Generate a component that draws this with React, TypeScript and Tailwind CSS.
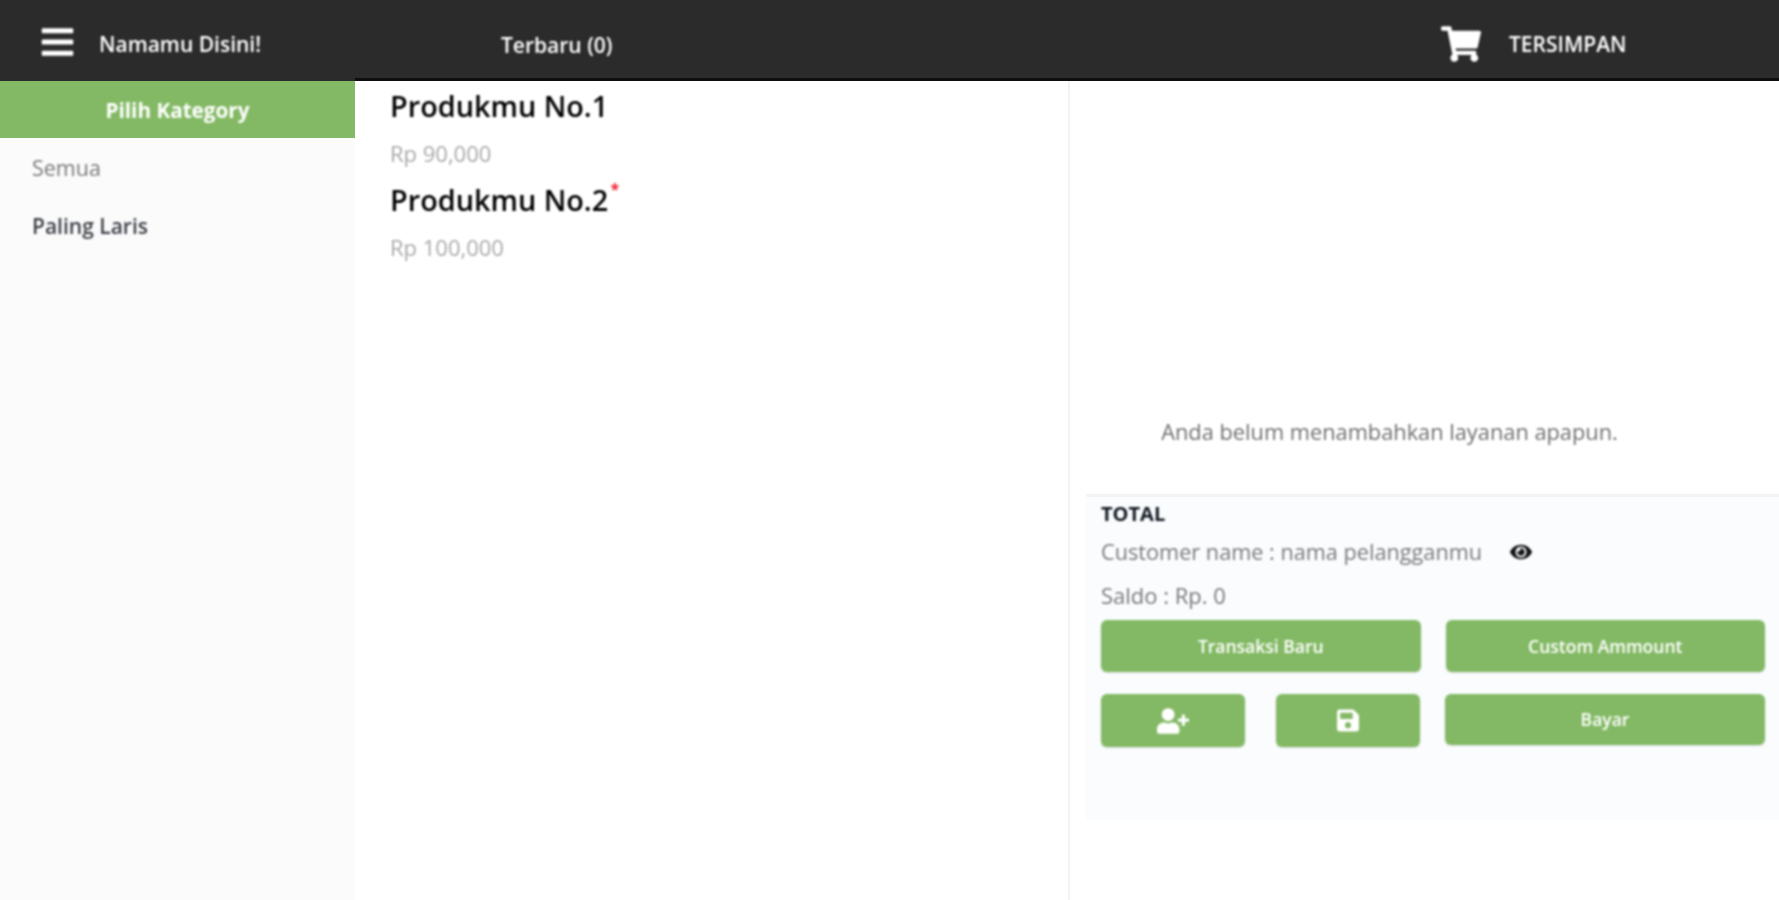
import { FaBars, FaShoppingCart, FaUserPlus, FaSave, FaEye } from "react-icons/fa";

const font = { fontFamily: '"Open Sans", sans-serif' };

function Product({ name, price, star }: { name: string; price: string; star?: boolean }) {
  return (
    <div className="h-[94px] pl-[35px]">
      <div className="relative w-fit text-[28.8px] leading-[38px] font-semibold text-black">
        {name}
        {star && <span className="absolute right-[-11px] top-[-4px] text-[16px] font-bold leading-[24px] text-[#f01c2c]">*</span>}
      </div>
      <div className="mt-[14px] text-[22px] leading-[28px] text-[#a8a8a8]">{price}</div>
    </div>
  );
}

function Btn({ className, children }: { className: string; children: React.ReactNode }) {
  return (
    <button className={`flex items-center justify-center rounded-[6px] bg-[#83b964] text-[17.5px] font-semibold text-white shadow-[0_1px_2px_rgba(0,0,0,0.12)] ${className}`}>
      {children}
    </button>
  );
}

export default function App() {
  return (
    <div style={font} className="flex h-[900px] w-[1779px] flex-col overflow-hidden bg-white">
      <header className="h-[81px] shrink-0 bg-[#2a2b2a] text-white">
        <div className="flex h-full items-center blur-[0.8px]">
          <FaBars className="ml-[41px] mt-[2px] h-[36px] w-[33px] text-white" />
          <span className="ml-[25px] mt-[9px] w-[402px] text-[21px] font-semibold">Namamu Disini!</span>
          <span className="mt-[11px] w-[940px] text-[21px] font-semibold">Terbaru (0)</span>
          <FaShoppingCart className="mt-[6px] h-[36px] w-[40px]" />
          <span className="ml-[28px] mt-[8px] text-[21px] font-semibold">TERSIMPAN</span>
        </div>
      </header>
      <main className="flex min-h-0 flex-1">
        <aside className="w-[355px] shrink-0 bg-[#fbfbfb]">
          <div className="flex h-[57px] items-center justify-center bg-[#83b964] pt-[2px] text-[20.7px] font-bold text-white">
            <span className="blur-[0.8px]">Pilih Kategory</span>
          </div>
          <div className="blur-[0.8px]">
            <div className="mt-[15px] pl-[32px] text-[21.5px] leading-[30px] text-[#787878]">Semua</div>
            <div className="mt-[28px] pl-[32px] text-[21px] font-semibold leading-[30px] text-[#3c4047]">Paling Laris</div>
          </div>
        </aside>
        <div className="-mt-[3px] flex flex-1 border-t-[3px] border-[#0e0e0e]">
          <section className="w-[715px] shrink-0 border-r-[2px] border-[#f3f3f3] pt-[6px]">
            <div className="blur-[0.8px]">
              <Product name="Produkmu No.1" price="Rp 90,000" />
              <Product name="Produkmu No.2" price="Rp 100,000" star />
            </div>
          </section>
          <section className="flex-1 pl-[16px]">
            <div className="flex h-[413px] items-end justify-center pb-[47px]">
              <span className="mr-[86px] text-[21.8px] leading-[30px] text-[#6e6e6e] blur-[0.8px]">Anda belum menambahkan layanan apapun.</span>
            </div>
            <div className="h-[326px] border-t-[3px] border-[#f2f4f6] bg-[#fafcfe] pl-[15px] pr-[14px]">
              <div className="blur-[0.8px]">
                <div className="pt-[3px] text-[20px] font-bold leading-[28px] text-[#101820]">TOTAL</div>
                <div className="mt-[10px] flex items-center text-[21.7px] leading-[28px] text-[#787878]">
                  <span>Customer name : nama pelangganmu</span>
                  <FaEye className="ml-[28px] h-[22px] w-[22px] text-[#101010]" />
                </div>
                <div className="mt-[15px] text-[22px] leading-[28px] text-[#787878]">Saldo : Rp. 0</div>
                <div className="mt-[11px] grid grid-cols-2 gap-x-[25px]">
                  <Btn className="h-[52px]">Transaksi Baru</Btn>
                  <Btn className="h-[52px]">Custom Ammount</Btn>
                </div>
                <div className="mt-[22px] flex items-start gap-x-[25px]">
                  <div className="flex w-[319px] justify-between">
                    <Btn className="h-[53px] w-[144px]"><FaUserPlus className="h-[26px] w-[32px]" /></Btn>
                    <Btn className="h-[53px] w-[144px]"><FaSave className="h-[25px] w-[24px]" /></Btn>
                  </div>
                  <Btn className="h-[51px] flex-1">Bayar</Btn>
                </div>
              </div>
            </div>
          </section>
        </div>
      </main>
    </div>
  );
}
